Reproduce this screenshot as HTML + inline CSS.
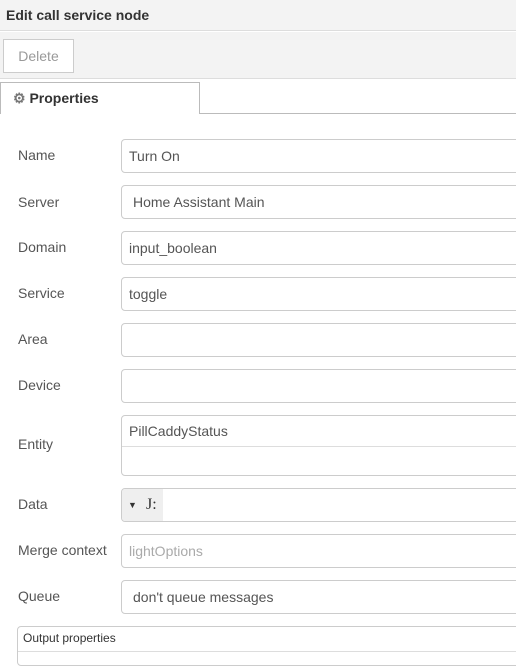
<!DOCTYPE html><html><head><style>
body{margin:0;width:516px;height:654px;overflow:hidden;background:#fff;font-family:"Liberation Sans",sans-serif;font-size:14px;color:#555;position:relative}
.a{position:absolute}
.hdr{left:0;top:0;width:516px;height:31px;background:#f3f3f3;border-bottom:1px solid #ddd;font-weight:bold;color:#333;font-size:14px;line-height:31px;padding-left:6px;box-sizing:border-box}
.tb{left:0;top:32px;width:516px;height:46px;background:#f3f3f3;border-bottom:1px solid #ddd}
.del{left:3px;top:39px;width:71px;height:34px;box-sizing:border-box;border:1px solid #ccc;background:#fff;color:#999;text-align:center;line-height:32px}
.tab{left:0;top:82px;width:200px;height:32px;box-sizing:border-box;border:1px solid #bbb;border-bottom:none;background:#fff;font-weight:bold;color:#333;line-height:30px;padding-left:12px}
.tl{left:199px;top:113px;width:317px;height:1px;background:#bbb}
.lb{left:18px;color:#555}
.in{left:121px;width:420px;height:34px;box-sizing:border-box;border:1px solid #ccc;border-radius:4px;color:#555;padding-left:7px;line-height:32px}
</style></head><body>
<div class="a hdr">Edit call service node</div>
<div class="a tb"></div>
<div class="a del">Delete</div>
<div class="a tab"><span style="color:#777">&#9881;</span> Properties</div>
<div class="a tl"></div>
<div class="a lb" style="top:147px">Name</div><div class="a in" style="top:139px">Turn On</div>
<div class="a lb" style="top:194px">Server</div><div class="a in" style="top:185px;padding-left:11px">Home Assistant Main</div>
<div class="a lb" style="top:239px">Domain</div><div class="a in" style="top:231px">input_boolean</div>
<div class="a lb" style="top:285px">Service</div><div class="a in" style="top:277px">toggle</div>
<div class="a lb" style="top:331px">Area</div><div class="a in" style="top:323px"></div>
<div class="a lb" style="top:377px">Device</div><div class="a in" style="top:369px"></div>
<div class="a lb" style="top:436px">Entity</div><div class="a in" style="top:415px;height:61px;line-height:30px">PillCaddyStatus<div class="a" style="left:0;top:30px;width:420px;height:1px;background:#ddd"></div></div>
<div class="a lb" style="top:496px">Data</div><div class="a in" style="top:488px;padding:0;overflow:hidden"><div style="position:relative;width:41px;height:32px;background:#efefef;color:#333"><span style="position:absolute;left:6px;top:0;font-size:9px">&#9660;</span><span style="position:absolute;left:24px;top:0;font-family:'Liberation Serif',serif;font-size:16px">J:</span></div></div>
<div class="a lb" style="top:542px">Merge context</div><div class="a in" style="top:534px;color:#aaa">lightOptions</div>
<div class="a lb" style="top:588px">Queue</div><div class="a in" style="top:580px;padding-left:11px">don't queue messages</div>
<div class="a" style="left:17px;top:626px;width:520px;height:40px;box-sizing:border-box;border:1px solid #ccc;border-radius:4px;font-size:12px;color:#333;padding:4px 5px">Output properties<div class="a" style="left:0;top:24px;width:520px;height:1px;background:#ddd"></div></div>
</body></html>
